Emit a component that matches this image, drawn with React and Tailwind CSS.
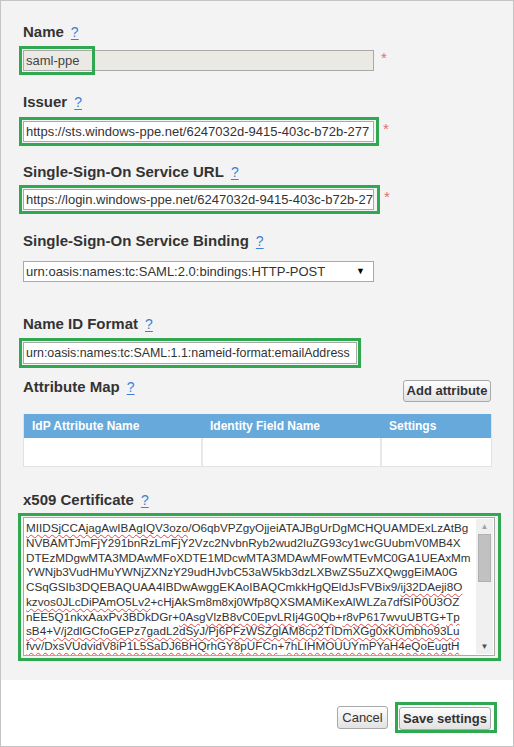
import React from "react";

const GREEN = "border-[#2fa84f]";

function Help() {
  return (
    <span className="ml-[7px] text-[14px] font-normal text-[#3d7fd6] underline underline-offset-2">?</span>
  );
}

function Label({ children, className = "" }) {
  return (
    <div className={"text-[15px] leading-[18px] font-bold text-[#333] " + className}>
      {children}
      <Help />
    </div>
  );
}

function Star({ className = "ml-[7px]" }) {
  return <span className={"text-[15px] leading-[15px] text-[#e07070] " + className}>*</span>;
}

const certLines = [
  [["MIIDSjCCAjagAwIBAgIQV3ozo", 1], ["/O6qbVPZgyOjjeiATAJBgUrDgMCHQUAMDExLzAtBg", 0]],
  [["NVBAMTJmFjY291bnRzLmFjY2Vzc2NvbnRyb2wud2luZG93cy1wcGUubmV0MB4X", 0]],
  [["DTEzMDgwMTA3MDAwMFoXDTE1MDcwMTA3MDAwMFowMTEvMC0GA1UEAxMm", 0]],
  [["YWNjb3VudHMuYWNjZXNzY29udHJvbC53aW5kb3dzLXBwZS5uZXQwggEiMA0G", 0]],
  [["CSqGSIb3DQEBAQUAA4IBDwAwggEKAoIBAQCmkkHgQEldJsFVBix9/", 0], ["ij32DAeji8O", 1]],
  [["kzvos0JLcDiPAmO5Lv2", 1], ["+cHjAkSm8m8xj0Wfp8QXSMAMiKexAlWLZa7dfSIP0U3OZ", 0]],
  [["nEE5Q1nkxAaxPv3BDkDGr+", 0], ["0AsgVlzB8vC0EpvLRIj4G0Qb", 1], ["+", 0], ["r8vP617wvuUBTG", 1], ["+", 0], ["Tp", 1]],
  [["sB4", 1], ["+", 0], ["V/j2dlGCfoGEPz7gadL2dSyJ/Pj6PFzWSZglAM8cp2TIDmXGg0xKUmbho93Lu", 1]],
  [["fvv/DxsVUdvidV8iP1L5SaDJ6BHQrhGY8pUFCn", 1], ["+", 0], ["7hLIHMOUUYmPYaH4eQoEugtH", 1]],
];

export default function App() {
  return (
    <div className="w-[514px] h-[747px] border border-[#c4c4c4] bg-white flex flex-col font-['Liberation_Sans',Arial,sans-serif] text-[#333] overflow-hidden">
      <div className="h-[679px] bg-[#f3f3f3] pl-[22px] pt-[22px] flex flex-col shrink-0">
        {/* Name */}
        <Label>Name</Label>
        <div className="mt-[9px] flex items-start">
          <div className="relative">
            <div className="w-[351px] h-[21px] border border-[#a9a9a9] bg-[#ebe9e4] px-[2px] text-[13px] leading-[19px] text-[#444] whitespace-nowrap overflow-hidden">
              saml-ppe
            </div>
            <div className={"absolute left-[-4px] top-[-4px] w-[76px] h-[29px] border-[3px] " + GREEN}></div>
          </div>
          <Star className="ml-[7px]" />
        </div>

        {/* Issuer */}
        <Label className="mt-[22px]">Issuer</Label>
        <div className="mt-[10px] flex items-start">
          <div className="relative">
            <div className="w-[351px] h-[21px] border border-[#a9a9a9] bg-white px-[2px] text-[13px] leading-[19px] text-[#333] whitespace-nowrap overflow-hidden">
              https://sts.windows-ppe.net/6247032d-9415-403c-b72b-277
            </div>
            <div className={"absolute left-[-4px] top-[-4px] w-[360px] h-[29px] border-[3px] " + GREEN}></div>
          </div>
          <Star className="ml-[9px]" />
        </div>

        {/* SSO URL */}
        <Label className="mt-[21px]">Single-Sign-On Service URL</Label>
        <div className="mt-[8px] flex items-start">
          <div className="relative">
            <div className="w-[351px] h-[21px] border border-[#a9a9a9] bg-white px-[2px] text-[13px] leading-[19px] text-[#333] whitespace-nowrap overflow-hidden">
              https://login.windows-ppe.net/6247032d-9415-403c-b72b-27
            </div>
            <div className={"absolute left-[-4px] top-[-4px] w-[361px] h-[29px] border-[3px] " + GREEN}></div>
          </div>
          <Star className="ml-[10px]" />
        </div>

        {/* SSO Binding */}
        <Label className="mt-[22px]">Single-Sign-On Service Binding</Label>
        <div className="mt-[11px] w-[351px] h-[21px] border border-[#a9a9a9] bg-white pl-[2px] pr-[8px] flex items-center justify-between text-[13px] text-[#333]">
          <span className="whitespace-nowrap">urn:oasis:names:tc:SAML:2.0:bindings:HTTP-POST</span>
          <span className="text-[9px] text-black">▼</span>
        </div>

        {/* Name ID Format */}
        <Label className="mt-[33px]">Name ID Format</Label>
        <div className="mt-[9px] relative self-start">
          <div className="w-[334px] h-[22px] border border-[#a9a9a9] bg-white px-[2px] text-[12.4px] leading-[20px] text-[#333] whitespace-nowrap overflow-hidden">
            urn:oasis:names:tc:SAML:1.1:nameid-format:emailAddress
          </div>
          <div className={"absolute left-[-4px] top-[-4px] w-[342px] h-[30px] border-[3px] " + GREEN}></div>
        </div>

        {/* Attribute Map */}
        <div className="mt-[14px] w-[468px] flex items-start justify-between">
          <Label>Attribute Map</Label>
          <button className="mt-[2px] h-[22px] w-[88px] rounded-[3px] border border-[#a8a8a8] bg-gradient-to-b from-[#fdfdfd] to-[#e2e2e2] text-[13px] font-bold text-[#333]">
            Add attribute
          </button>
        </div>

        {/* Table */}
        <div className="mt-[12px] w-[469px] border border-t-0 border-[#e2e2e2]">
          <div className="h-[24px] bg-[#68a9db] grid grid-cols-[179px_179px_1fr] items-center text-[12px] font-bold text-white">
            <div className="pl-[8px]">IdP Attribute Name</div>
            <div className="pl-[7px]">Identity Field Name</div>
            <div className="pl-[7px]">Settings</div>
          </div>
          <div className="h-[28px] grid grid-cols-[179px_179px_1fr] bg-white">
            <div className="border-r-2 border-[#e8e8e8]"></div>
            <div className="border-r-2 border-[#e8e8e8]"></div>
            <div></div>
          </div>
        </div>

        {/* x509 */}
        <Label className="mt-[24px]">x509 Certificate</Label>
        <div className="mt-[8px] relative self-start">
          <div className="w-[472px] h-[139px] border border-[#a9a9a9] bg-white flex">
            <div className="flex-1 min-w-0 pl-[2px] pt-[3px] overflow-hidden text-[11.7px] leading-[14.75px] text-[#333] whitespace-nowrap">
              {certLines.map((line, i) => (
                <div key={i}>
                  {line.map(([t, u], j) =>
                    u ? (
                      <span key={j} className="underline decoration-wavy decoration-[#e04a4a] decoration-1 underline-offset-[2px]">
                        {t}
                      </span>
                    ) : (
                      <span key={j}>{t}</span>
                    )
                  )}
                </div>
              ))}
            </div>
            <div className="w-[17px] my-[1px] mr-[1px] bg-[#f0f0f0] flex flex-col items-center">
              <div className="h-[15px] flex items-center justify-center text-[8px] text-[#a3a3a3]">▲</div>
              <div className="w-[13px] h-[48px] bg-[#c1c1c1] border border-[#b0b0b0]"></div>
              <div className="flex-1"></div>
              <div className="h-[15px] flex items-center justify-center text-[8px] text-[#505050]">▼</div>
            </div>
          </div>
          <div className={"absolute left-[-5px] top-[-4px] w-[483px] h-[148px] border-[3px] " + GREEN}></div>
        </div>
      </div>

      {/* Footer */}
      <div className="flex-1 bg-white flex justify-end items-start pt-[26px] pr-[22px] gap-[11px]">
        <button className="h-[23px] w-[51px] rounded-[3px] border border-[#a8a8a8] bg-gradient-to-b from-[#fdfdfd] to-[#e2e2e2] text-[13px] text-[#333]">
          Cancel
        </button>
        <div className="relative">
          <button className="h-[23px] w-[92px] rounded-[3px] border border-[#a8a8a8] bg-gradient-to-b from-[#fdfdfd] to-[#e2e2e2] text-[13px] font-bold text-[#333]">
            Save settings
          </button>
          <div className={"absolute left-[-4px] top-[-4px] w-[102px] h-[31px] border-[3px] " + GREEN}></div>
        </div>
      </div>
    </div>
  );
}
